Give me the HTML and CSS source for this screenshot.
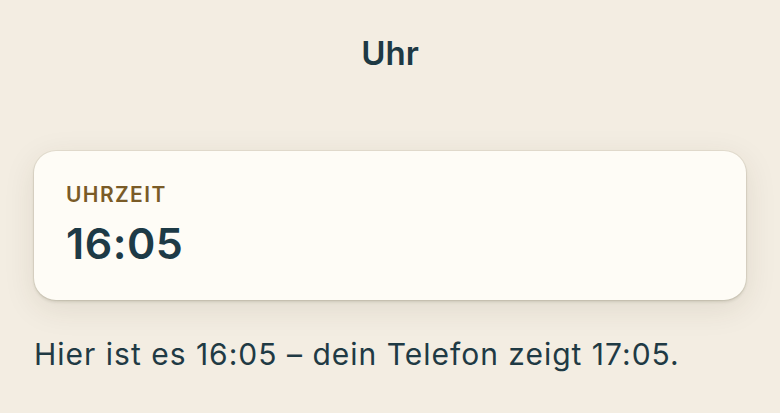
FILE: index.html
```html
<!DOCTYPE html>
<html lang="de">
<head>
<meta charset="utf-8">
<title>Uhr</title>
<link rel="stylesheet" href="styles.css">
</head>
<body>
<header class="nav">
  <h1 class="nav-title">Uhr</h1>
</header>
<main class="content">
  <section class="card">
    <div class="card-label">UHRZEIT</div>
    <div class="card-value">16:05</div>
  </section>
  <p class="note">Hier ist es 16:05 – dein Telefon zeigt 17:05.</p>
</main>
</body>
</html>
```

FILE: styles.css
```css
html, body {
  margin: 0;
  padding: 0;
}
body {
  width: 780px;
  height: 413px;
  overflow: hidden;
  background: #f3ede2;
  font-family: Inter, "Noto Sans", sans-serif;
  color: #1d3944;
}
.nav {
  height: 106px;
  box-sizing: border-box;
  padding-top: 33px;
  display: flex;
  justify-content: center;
  align-items: flex-start;
}
.nav-title {
  margin: 0;
  font-size: 33px;
  line-height: 40px;
  font-weight: 600;
  color: #1d3944;
}
.content {
  padding: 45px 34px 0;
}
.card {
  background: #fefcf6;
  border-radius: 22px;
  height: 149px;
  box-sizing: border-box;
  padding: 31px 32px 0;
  box-shadow: 0 0 0 1px rgba(120, 110, 80, 0.10), 0 2px 3px rgba(60, 55, 30, 0.14), 0 8px 32px rgba(60, 50, 20, 0.10);
}
.card-label {
  font-size: 21px;
  font-weight: 600;
  letter-spacing: 1.4px;
  color: #7a5b27;
  line-height: 26px;
}
.card-value {
  margin-top: 10px;
  font-size: 43px;
  font-weight: 600;
  line-height: 50px;
  letter-spacing: 0.5px;
  color: #1d3a46;
}
.note {
  margin: 36px 0 0;
  font-size: 30px;
  line-height: 36px;
  letter-spacing: 1px;
  color: #1f3a44;
}
```
